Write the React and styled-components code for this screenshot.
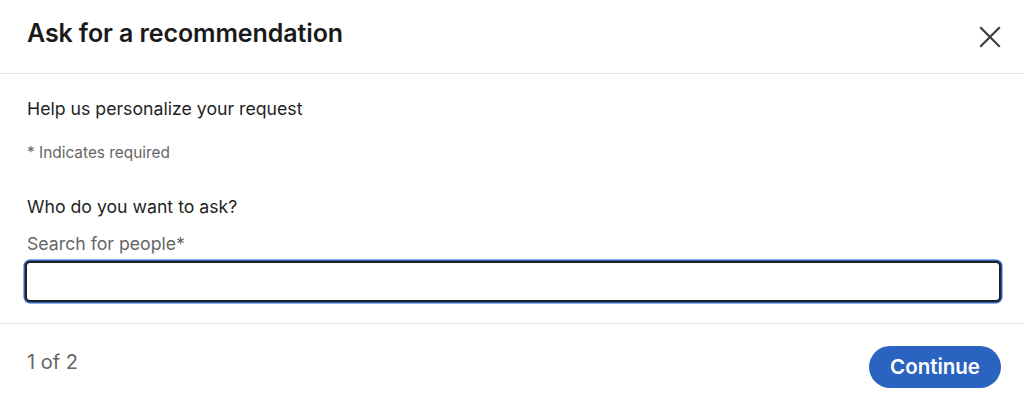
import React from "react";
import styled, { createGlobalStyle } from "styled-components";

const Global = createGlobalStyle`
  html, body { margin: 0; padding: 0; background: #fff; }
  body { font-family: Inter, "Noto Sans", "Liberation Sans", sans-serif; -webkit-font-smoothing: antialiased; }
  * { box-sizing: border-box; }
`;

const Modal = styled.div`
  width: 1024px;
  height: 403px;
  background: #fff;
  display: flex;
  flex-direction: column;
`;

const Header = styled.header`
  height: 74px;
  border-bottom: 1px solid #e6e6e6;
  display: flex;
  align-items: center;
  justify-content: space-between;
  padding: 0 22px 0 27px;
`;

const Title = styled.h2`
  margin: 0;
  font-size: 25px;
  font-weight: 600;
  color: #1a1a1a;
  letter-spacing: -0.1px;
  line-height: 30px;
  padding-bottom: 7px;
`;

const CloseButton = styled.button`
  border: none;
  background: none;
  padding: 0;
  width: 24px;
  height: 24px;
  display: flex;
  align-items: center;
  justify-content: center;
  color: #3d3d3d;
  cursor: pointer;
`;

const Body = styled.div`
  flex: 0 0 auto;
  height: 250px;
  border-bottom: 1px solid #e6e6e6;
  padding: 24px 23px 0 25px;
  display: flex;
  flex-direction: column;
`;

const Lead = styled.p`
  margin: 0 0 0 2px;
  font-size: 17.7px;
  color: #1f1f1f;
  line-height: 22px;
`;

const Required = styled.p`
  margin: 24px 0 0 2px;
  font-size: 15.4px;
  color: #666;
  line-height: 18px;
`;

const Question = styled.p`
  margin: 34px 0 0 2px;
  font-size: 17.7px;
  color: #1f1f1f;
  line-height: 22px;
`;

const Label = styled.label`
  margin: 15px 0 0 2px;
  font-size: 17.7px;
  color: #666;
  line-height: 22px;
`;

const Input = styled.input`
  margin-top: 6px;
  width: 976px;
  height: 41px;
  border: 2px solid #1d2226;
  border-radius: 5px;
  box-shadow: 0 0 0 1.5px #2c64c0;
  font-size: 16px;
  padding: 0 10px;
  outline: none;
  background: #fff;
`;

const Footer = styled.footer`
  flex: 1;
  display: flex;
  align-items: center;
  justify-content: space-between;
  padding: 0 23px 0 27px;
`;

const Step = styled.span`
  font-size: 20px;
  color: #666;
  padding-bottom: 4px;
`;

const PrimaryButton = styled.button`
  border: none;
  background: #2a64c0;
  color: #fff;
  font-family: inherit;
  font-size: 20.5px;
  font-weight: 600;
  height: 42px;
  padding: 0 21px;
  border-radius: 21px;
  cursor: pointer;
  margin-top: 6px;
`;

export default function App() {
  return (
    <>
      <Global />
      <Modal>
        <Header>
          <Title>Ask for a recommendation</Title>
          <CloseButton aria-label="Dismiss">
            <svg width="22" height="22" viewBox="0 0 22 22" fill="none">
              <path d="M2 2 L20 20 M20 2 L2 20" stroke="currentColor" strokeWidth="2.2" strokeLinecap="square" />
            </svg>
          </CloseButton>
        </Header>
        <Body>
          <Lead>Help us personalize your request</Lead>
          <Required>* Indicates required</Required>
          <Question>Who do you want to ask?</Question>
          <Label htmlFor="search">Search for people*</Label>
          <Input id="search" type="text" />
        </Body>
        <Footer>
          <Step>1 of 2</Step>
          <PrimaryButton>Continue</PrimaryButton>
        </Footer>
      </Modal>
    </>
  );
}
